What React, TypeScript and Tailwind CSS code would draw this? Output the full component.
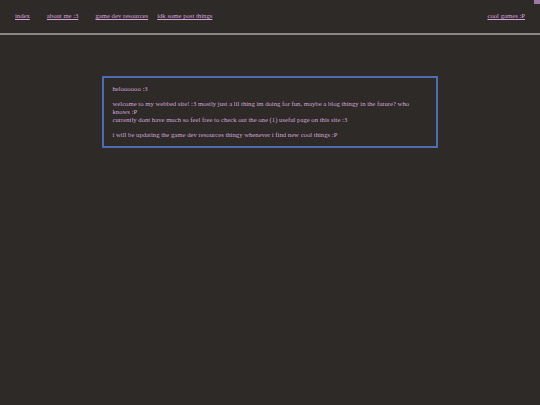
export default function App() {
  const link = 'text-[#d2a2d8] underline decoration-[#d2a2d8]';
  return (
    <div className="relative h-[405px] w-[540px] overflow-hidden bg-[#2e2a27] font-['Liberation_Serif',serif] text-[6.7px] leading-[8px] text-[#d2a2d8]">
      <div className="absolute right-0 top-0 h-[4px] w-[6px] bg-[#9b7aa8]" />
      <nav className="flex h-[33px] items-center pb-[1px] pl-[15px] pr-[15px]">
        <a className={link}>index</a>
        <a className={`${link} ml-[17px]`}>about me :3</a>
        <a className={`${link} ml-[17px]`}>game dev resources</a>
        <a className={`${link} ml-[9px]`}>idk some post things</a>
        <a className={`${link} ml-auto`}>cool games :P</a>
      </nav>
      <div className="h-[2px] w-full bg-[#8c8782]" />
      <main className="flex justify-center pt-[41px]">
        <div className="ml-[-1px] w-[336px] border-2 border-[#4b6db0] px-[9px]">
          <p className="my-[7px]">heloooooo :3</p>
          <p className="my-[7px]">
            welcome to my webbed site! :3 mostly just a lil thing im doing for fun, maybe a blog thingy in the future? who knows :P
            <br />
            currently dont have much so feel free to check out the one (1) useful page on this site :3
          </p>
          <p className="my-[7px]">i will be updating the game dev resources thingy whenever i find new cool things :P</p>
        </div>
      </main>
    </div>
  );
}
